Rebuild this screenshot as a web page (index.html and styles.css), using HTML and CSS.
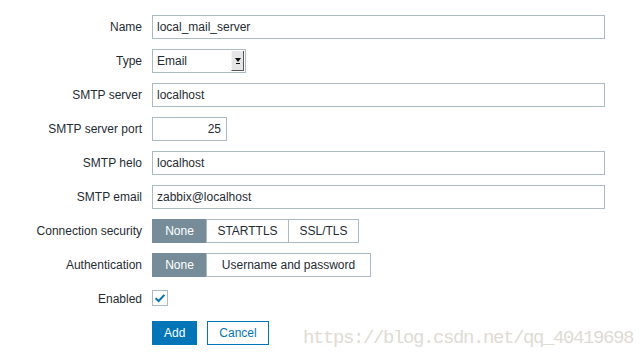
FILE: index.html
```html
<!DOCTYPE html>
<html>
<head>
	<title>Media types - Zabbix</title>
	<link rel="stylesheet" href="styles.css">
</head>
<body>
	<form class="media-form">
		<label class="form-label">Name</label>
		<div class="text-field wide">local_mail_server</div>

		<label class="form-label">Type</label>
		<div class="select">
			<span class="select-text">Email</span>
			<span class="select-arrow"><span class="triangle"></span></span>
		</div>

		<label class="form-label">SMTP server</label>
		<div class="text-field wide">localhost</div>

		<label class="form-label">SMTP server port</label>
		<div class="text-field port">25</div>

		<label class="form-label">SMTP helo</label>
		<div class="text-field wide">localhost</div>

		<label class="form-label">SMTP email</label>
		<div class="text-field wide">zabbix@localhost</div>

		<label class="form-label">Connection security</label>
		<div class="segmented">
			<span class="segment selected seg-none">None</span>
			<span class="segment seg-starttls">STARTTLS</span>
			<span class="segment seg-ssl">SSL/TLS</span>
		</div>

		<label class="form-label">Authentication</label>
		<div class="segmented">
			<span class="segment selected seg-none">None</span>
			<span class="segment seg-userpass">Username and password</span>
		</div>

		<label class="form-label">Enabled</label>
		<div class="checkbox">
			<svg width="14" height="14" viewBox="0 0 14 14">
				<path d="M2.6 7.3 L5.6 10 L11.4 3.9" fill="none" stroke="#0275b8" stroke-width="2"/>
			</svg>
		</div>

		<span></span>
		<div class="buttons">
			<button type="button" class="btn btn-primary">Add</button>
			<button type="button" class="btn btn-alt">Cancel</button>
		</div>
	</form>

	<div class="watermark">https://blog.csdn.net/qq_40419698</div>
</body>
</html>
```

FILE: styles.css
```css
body {
	margin: 0;
	font-family: 'Liberation Sans', Arial, sans-serif;
	font-size: 12px;
	color: #1f2c33;
	background-color: #fff;
}

.media-form {
	display: grid;
	grid-template-columns: 142px auto;
	grid-auto-rows: 24px;
	column-gap: 10px;
	row-gap: 10px;
	padding-top: 15px;
	align-items: center;
	justify-items: start;
}

.form-label {
	justify-self: end;
	text-align: right;
	line-height: 24px;
}

.text-field {
	box-sizing: border-box;
	height: 24px;
	line-height: 22px;
	padding: 0 5px 0 4px;
	border: 1px solid #acbbc2;
	background-color: #fff;
}

.text-field.wide {
	width: 453px;
}

.text-field.port {
	width: 75px;
	text-align: right;
}

.select {
	box-sizing: border-box;
	display: flex;
	width: 94px;
	height: 24px;
	border: 1px solid #acbbc2;
}

.select-text {
	flex: 1;
	padding-left: 4px;
	line-height: 22px;
}

.select-arrow {
	display: flex;
	align-items: center;
	justify-content: center;
	width: 11px;
	margin: 1px 1px 1px 0;
	background-color: #e6e6e6;
	border-left: 1px solid #f6f6f6;
	border-right: 1px solid #555;
	border-bottom: 1px solid #555;
}

.triangle {
	width: 0;
	height: 0;
	border-left: 3px solid transparent;
	border-right: 3px solid transparent;
	border-top: 4px solid #111;
	border-bottom: 1px solid transparent;
	box-shadow: 0 2px 0 -1px #111;
}

.segmented {
	display: flex;
	height: 24px;
}

.segment {
	box-sizing: border-box;
	height: 24px;
	line-height: 22px;
	text-align: center;
	border: 1px solid #acbbc2;
	margin-left: -1px;
	background-color: #fff;
}

.segment:first-child {
	margin-left: 0;
}

.segment.selected {
	background-color: #768d99;
	border-color: #768d99;
	color: #fff;
}

.seg-none {
	width: 55px;
}

.seg-starttls {
	width: 83px;
}

.seg-ssl {
	width: 71px;
}

.seg-userpass {
	width: 165px;
}

.checkbox {
	box-sizing: border-box;
	display: flex;
	align-items: center;
	justify-content: center;
	width: 16px;
	height: 16px;
	border: 1px solid #acbbc2;
	align-self: start;
	margin-top: 3px;
}

.buttons {
	display: flex;
	gap: 10px;
}

.btn {
	box-sizing: border-box;
	height: 24px;
	padding: 0 11px;
	font-family: inherit;
	font-size: 12px;
	border: 1px solid #0275b8;
	cursor: pointer;
}

.btn-primary {
	background-color: #0275b8;
	color: #fff;
}

.btn-alt {
	background-color: #fff;
	color: #0275b8;
}

.watermark {
	position: absolute;
	left: 303px;
	top: 327px;
	font-family: 'Liberation Mono', monospace;
	font-size: 19px;
	letter-spacing: -1.4px;
	color: #dedbd5;
	white-space: nowrap;
}
```
